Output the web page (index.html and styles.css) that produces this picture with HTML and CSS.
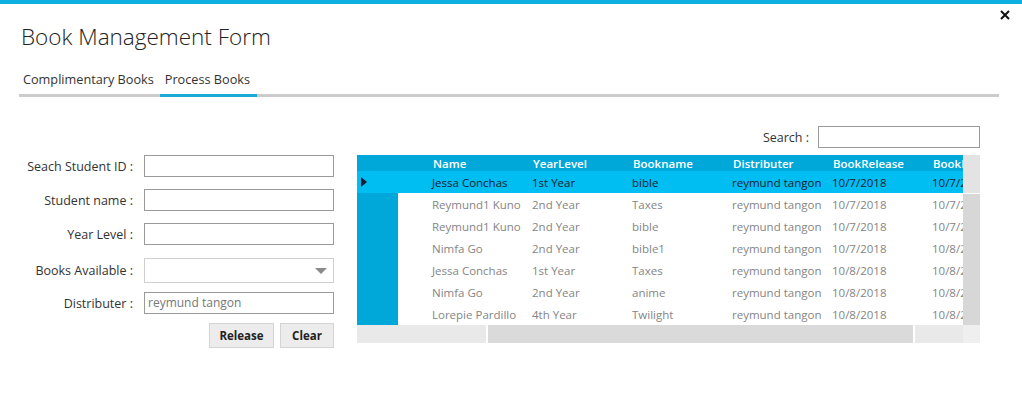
FILE: index.html
```html
<!DOCTYPE html>
<html>
<head>
<meta charset="utf-8">
<link rel="stylesheet" href="styles.css">
</head>
<body>
<div class="topbar"></div>
<div class="close"><svg width="10" height="10" viewBox="0 0 10 10"><path d="M1 1 L9 9 M9 1 L1 9" stroke="#111" stroke-width="2"/></svg></div>
<h1 class="title">Book Management Form</h1>
<nav class="tabs">
  <span class="tab">Complimentary Books</span>
  <span class="tab active">Process Books</span>
</nav>
<main class="content">
  <section class="form">
    <div class="row"><span class="lbl">Seach Student ID :</span><div class="field"></div></div>
    <div class="row"><span class="lbl">Student name :</span><div class="field"></div></div>
    <div class="row"><span class="lbl">Year Level :</span><div class="field"></div></div>
    <div class="row combo-row"><span class="lbl">Books Available :</span><div class="field combo"><span class="caret"></span></div></div>
    <div class="row"><span class="lbl">Distributer :</span><div class="field filled">reymund tangon</div></div>
    <div class="buttons"><span class="btn btn-release">Release</span><span class="btn btn-clear">Clear</span></div>
  </section>
  <section class="gridpanel">
    <div class="searchrow"><span class="slbl">Search :</span><div class="field search"></div></div>
    <div class="grid">
      <div class="gridmain">
        <div class="cells">
          <div class="grow head"><span class="rh"></span><span class="c0"></span><span class="c">Name</span><span class="c">YearLevel</span><span class="c">Bookname</span><span class="c">Distributer</span><span class="c">BookRelease</span><span class="c last">BookReturn</span></div>
          <div class="grow sel"><span class="rh"><svg width="8" height="12" viewBox="0 0 8 12"><path d="M1 1 L7 6 L1 11 Z" fill="#1b1b33"/></svg></span><span class="c0"></span><span class="c">Jessa Conchas</span><span class="c">1st Year</span><span class="c">bible</span><span class="c">reymund tangon</span><span class="c">10/7/2018</span><span class="c last">10/7/2018</span></div>
          <div class="grow"><span class="rh"></span><span class="c0"></span><span class="c">Reymund1 Kuno</span><span class="c">2nd Year</span><span class="c">Taxes</span><span class="c">reymund tangon</span><span class="c">10/7/2018</span><span class="c last">10/7/2018</span></div>
          <div class="grow"><span class="rh"></span><span class="c0"></span><span class="c">Reymund1 Kuno</span><span class="c">2nd Year</span><span class="c">bible</span><span class="c">reymund tangon</span><span class="c">10/7/2018</span><span class="c last">10/7/2018</span></div>
          <div class="grow"><span class="rh"></span><span class="c0"></span><span class="c">Nimfa Go</span><span class="c">2nd Year</span><span class="c">bible1</span><span class="c">reymund tangon</span><span class="c">10/7/2018</span><span class="c last">10/8/2018</span></div>
          <div class="grow"><span class="rh"></span><span class="c0"></span><span class="c">Jessa Conchas</span><span class="c">1st Year</span><span class="c">Taxes</span><span class="c">reymund tangon</span><span class="c">10/8/2018</span><span class="c last">10/8/2018</span></div>
          <div class="grow"><span class="rh"></span><span class="c0"></span><span class="c">Nimfa Go</span><span class="c">2nd Year</span><span class="c">anime</span><span class="c">reymund tangon</span><span class="c">10/8/2018</span><span class="c last">10/8/2018</span></div>
          <div class="grow"><span class="rh"></span><span class="c0"></span><span class="c">Lorepie Pardillo</span><span class="c">4th Year</span><span class="c">Twilight</span><span class="c">reymund tangon</span><span class="c">10/8/2018</span><span class="c last">10/8/2018</span></div>
        </div>
        <div class="vscroll"><div class="vtop"></div><div class="vthumb"></div></div>
      </div>
      <div class="hscroll"><div class="htrack hleft"></div><div class="hthumb"></div><div class="htrack hright"></div><div class="hcorner"></div></div>
    </div>
  </section>
</main>
</body>
</html>
```
FILE: styles.css
```css
html, body { margin: 0; padding: 0; }
body {
  width: 1022px;
  height: 411px;
  overflow: hidden;
  position: relative;
  background: #fff;
  font-family: "Open Sans", "Noto Sans", sans-serif;
  color: #333;
}
.topbar { height: 4px; background: #0cafe0; }
.close { position: absolute; left: 1000px; top: 10px; width: 10px; height: 10px; line-height: 0; }
.title {
  margin: 0;
  padding: 17px 0 0 21px;
  font-size: 22.5px;
  font-weight: 300;
  line-height: 32px;
  color: #222;
  letter-spacing: 0;
}
.tabs {
  display: flex;
  margin: 18px 23px 0 19px;
  border-bottom: 3px solid #cccccc;
  height: 23px;
}
.tab {
  font-size: 12.7px;
  color: #333;
  height: 23px;
  line-height: 16px;
  box-sizing: border-box;
}
.tab:first-child { padding: 0 6px 0 4px; }
.tab.active { width: 97px; padding-left: 5px; box-shadow: 0 3px 0 #1aa9d6; }
.content { display: flex; }
.form {
  width: 357px;
  padding-top: 58px;
  display: flex;
  flex-direction: column;
}
.row { display: flex; align-items: center; height: 22px; margin-bottom: 12px; }
.row.combo-row { height: 25px; margin-top: 1px; margin-bottom: 9px; }
.lbl {
  width: 133px;
  text-align: right;
  font-size: 12.5px;
  color: #333;
  margin-right: 11px;
}
.field {
  box-sizing: border-box;
  width: 190px;
  height: 22px;
  border: 1px solid #9a9a9a;
  background: #fff;
}
.field.combo { height: 25px; border-color: #cfcfcf; position: relative; }
.caret {
  position: absolute; right: 6px; top: 9px;
  border-left: 6px solid transparent; border-right: 6px solid transparent; border-top: 6px solid #8a8a8a;
}
.field.filled { font-size: 12px; color: #777; padding-left: 3px; line-height: 19px; }
.buttons { display: flex; justify-content: flex-end; gap: 6px; width: 334px; margin-top: -3px; }
.btn {
  box-sizing: border-box;
  height: 25px;
  background: #ececec;
  border: 1px solid #d4d4d4;
  font-size: 11.5px;
  font-weight: 700;
  color: #222;
  display: flex; align-items: center; justify-content: center;
}
.btn-release { width: 65px; }
.btn-clear { width: 54px; }
.gridpanel { width: 623px; padding-top: 29px; }
.searchrow { display: flex; justify-content: flex-end; align-items: center; height: 22px; margin-bottom: 7px; }
.slbl { font-size: 12.5px; color: #333; margin-right: 9px; }
.field.search { width: 162px; }
.grid { width: 623px; }
.gridmain { display: flex; }
.cells { width: 606px; overflow: hidden; }
.grow { display: flex; height: 22px; align-items: center; white-space: nowrap; font-size: 11.5px; color: #858585; }
.grow .rh { width: 41px; flex: none; height: 100%; background: #00a8d9; display: flex; align-items: center; padding-left: 3px; box-sizing: border-box; }
.grow .c0 { width: 31px; flex: none; }
.grow .c { width: 100px; flex: none; padding-left: 3px; box-sizing: border-box; overflow: hidden; }
.grow .c.last { width: 34px; }
.grow.head { height: 16px; background: #00a8d9; color: #fff; font-weight: 600; font-size: 11.5px; }
.grow.head .c { padding-left: 4px; }
.grow.sel { background: #00bef2; color: #1b1b33; }
.grow.sel .rh { background: #00bef2; }
.vscroll { width: 17px; display: flex; flex-direction: column; }
.vtop { height: 38px; background: #e3e3e3; border-bottom: 1px solid #fff; }
.vthumb { flex: 1; background: #d7d7d7; }
.hscroll { display: flex; height: 18px; }
.htrack { background: #e9e9e9; }
.hleft { width: 129px; margin-right: 2px; }
.hthumb { width: 425px; background: #dadada; margin-right: 2px; }
.hright { width: 48px; }
.hcorner { width: 17px; background: #efefef; }
```
